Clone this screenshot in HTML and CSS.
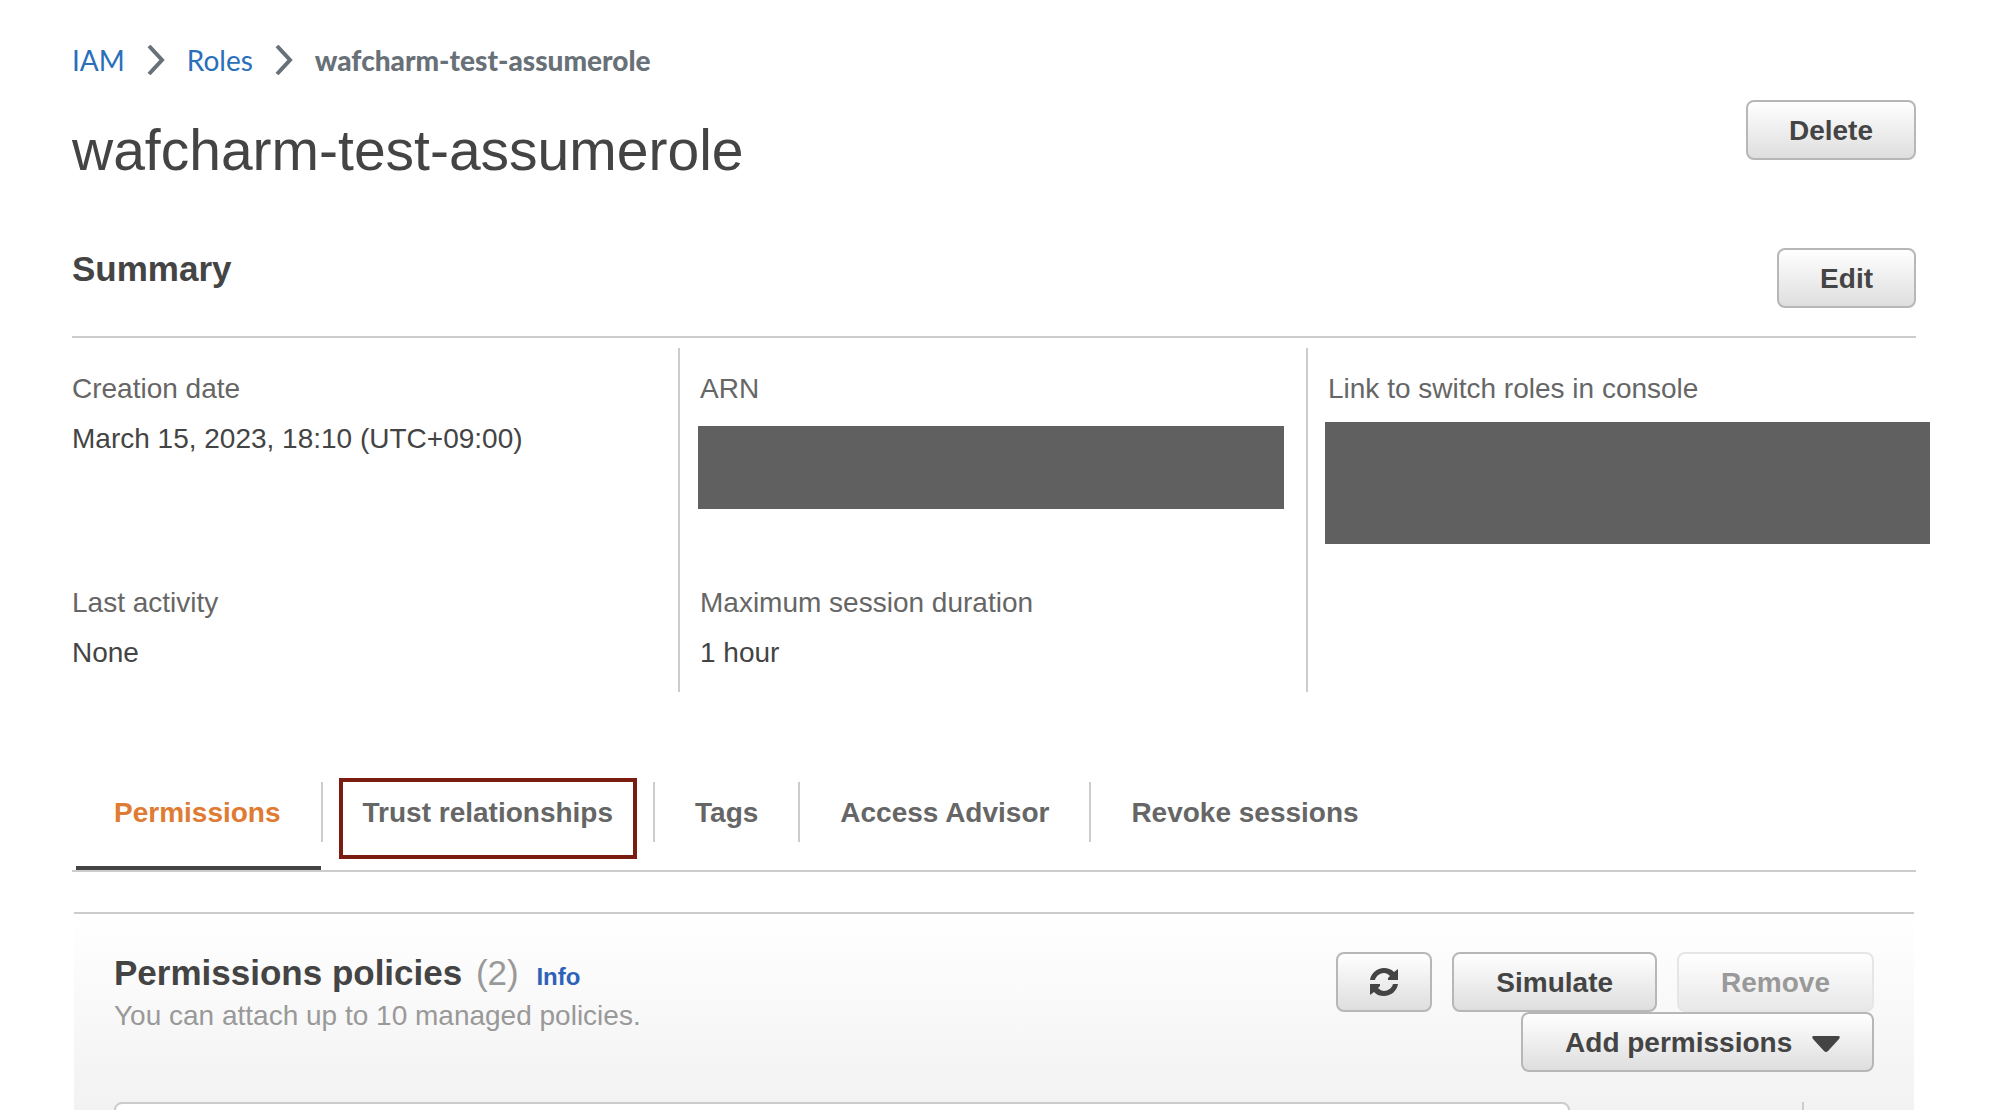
FILE: index.html
```html
<!DOCTYPE html>
<html lang="en">
<head>
<meta charset="UTF-8">
<meta name="viewport" content="width=device-width, initial-scale=1">
<title>wafcharm-test-assumerole</title>
<link rel="stylesheet" href="styles.css">
</head>
<body>
<nav class="breadcrumb" aria-label="Breadcrumb">
    <a href="#">IAM</a>
    <svg class="chevron" viewBox="0 0 18 30" aria-hidden="true"><path d="M2 1 L15 15 L2 29"/></svg>
    <a href="#">Roles</a>
    <svg class="chevron" viewBox="0 0 18 30" aria-hidden="true"><path d="M2 1 L15 15 L2 29"/></svg>
    <span class="current">wafcharm-test-assumerole</span>
</nav>

<header class="title-row">
    <h1>wafcharm-test-assumerole</h1>
    <button type="button" class="btn">Delete</button>
</header>

<section class="summary">
    <div class="summary-head">
        <h2>Summary</h2>
        <button type="button" class="btn">Edit</button>
    </div>
    <div class="summary-grid">
        <div class="column">
            <dl>
                <dt>Creation date</dt>
                <dd>March 15, 2023, 18:10 (UTC+09:00)</dd>
            </dl>
            <dl>
                <dt>Last activity</dt>
                <dd>None</dd>
            </dl>
        </div>
        <div class="column">
            <dl>
                <dt>ARN</dt>
                <dd class="redacted arn"></dd>
            </dl>
            <dl>
                <dt>Maximum session duration</dt>
                <dd>1 hour</dd>
            </dl>
        </div>
        <div class="column">
            <dl>
                <dt>Link to switch roles in console</dt>
                <dd class="redacted console-link"></dd>
            </dl>
        </div>
    </div>
</section>

<nav class="tabs" aria-label="Role details">
    <a href="#" class="tab active">Permissions</a>
    <a href="#" class="tab marked">Trust relationships</a>
    <a href="#" class="tab">Tags</a>
    <a href="#" class="tab">Access Advisor</a>
    <a href="#" class="tab">Revoke sessions</a>
</nav>

<section class="panel">
    <div class="panel-head">
        <div class="panel-title">
            <h2>Permissions policies <span class="count">(2)</span> <a href="#" class="info">Info</a></h2>
            <p>You can attach up to 10 managed policies.</p>
        </div>
        <div class="actions">
            <button type="button" class="btn btn-icon" aria-label="Refresh">
                <svg class="refresh" viewBox="0 0 28 28" aria-hidden="true">
                    <path d="M0 12 C1 5 7 0 14 0 C18 0 21 1 24 4 L28 1 V12 H18 V10 L20 8 C18 6 16 5 14 5 C10 5 6 8 5 12 Z"/>
                    <path transform="rotate(180 14 14)" d="M0 12 C1 5 7 0 14 0 C18 0 21 1 24 4 L28 1 V12 H18 V10 L20 8 C18 6 16 5 14 5 C10 5 6 8 5 12 Z"/>
                </svg>
            </button>
            <button type="button" class="btn">Simulate</button>
            <button type="button" class="btn" disabled>Remove</button>
            <button type="button" class="btn btn-menu">Add permissions
                <svg class="caret" viewBox="0 0 28 16" aria-hidden="true"><path d="M2 0 H26 Q29 0 27 3 L16 15 Q14 17 12 15 L1 3 Q-1 0 2 0 Z"/></svg>
            </button>
        </div>
    </div>
    <div class="filter-row">
        <input type="text" class="filter" aria-label="Filter policies">
        <div class="pager"></div>
    </div>
</section>
</body>
</html>
```

FILE: styles.css
```css
* {
    box-sizing: border-box;
}
body {
    margin: 0;
    padding: 40px 76px 0 72px;
    height: 100vh;
    overflow: hidden;
    background: #fff;
    color: #444;
    font: 28px/50px "Helvetica Neue", "Liberation Sans", Arial, sans-serif;
}
h1, h2, p, dl, dd {
    margin: 0;
}
a {
    text-decoration: none;
}

/* breadcrumb */
.breadcrumb {
    display: flex;
    align-items: center;
    gap: 22px;
    height: 40px;
    font-family: "Amazon Ember", Lato, sans-serif;
    line-height: 40px;
}
.breadcrumb a {
    color: #2a6fba;
}
.breadcrumb .current {
    color: #687078;
    font-weight: 900;
}
.chevron {
    width: 18px;
    height: 30px;
    fill: none;
    stroke: #687078;
    stroke-width: 4;
}

/* buttons */
.btn {
    height: 60px;
    padding: 2px 41px 0;
    border: 2px solid #b7b7b7;
    border-radius: 8px;
    background: linear-gradient(#fff, #dedede);
    color: #444;
    font: bold 28px/54px "Helvetica Neue", "Liberation Sans", Arial, sans-serif;
    white-space: nowrap;
}
.btn:disabled {
    border-color: #e6e6e6;
    background: linear-gradient(#fff, #e8e8e8);
    color: #999;
}
.actions .btn {
    padding: 2px 42px 0;
}
.actions .btn-icon {
    padding: 0 32px;
}
.actions .btn-menu {
    padding-right: 32px;
}
.refresh {
    display: block;
    width: 28px;
    height: 28px;
    fill: #444;
}
.caret {
    width: 28px;
    height: 16px;
    margin-left: 12px;
    fill: #444;
}

/* title and summary */
.title-row, .summary-head {
    display: flex;
    justify-content: space-between;
}
.title-row {
    padding-top: 20px;
}
h1 {
    padding-top: 15px;
    font-size: 57px;
    font-weight: normal;
    line-height: 70px;
}
h2 {
    font-size: 35px;
    line-height: 42px;
}
.summary {
    padding-top: 63px;
}
.summary-head {
    padding-bottom: 28px;
    border-bottom: 2px solid #ccc;
}
.summary-grid {
    display: grid;
    grid-template-columns: repeat(3, 1fr);
    gap: 20px;
    margin: 10px -20px 0 0;
}
.column {
    padding: 16px 0 14px;
    border-right: 2px solid #ccc;
}
.column:last-child {
    border-right: 0;
}
.column dl:first-child {
    min-height: 214px;
}
dt {
    color: #666;
}
.redacted {
    background: #606060;
}
.arn {
    height: 83px;
    margin: 12px 22px 0 -2px;
}
.console-link {
    height: 122px;
    margin: 8px 6px 0 -3px;
}

/* tabs */
.tabs {
    display: flex;
    margin-top: 90px;
    padding: 0 0 28px 2px;
    border-bottom: 2px solid #ccc;
}
.tab {
    position: relative;
    height: 60px;
    padding: 0 40px;
    border-right: 2px solid #ccc;
    color: #666;
    font-weight: bold;
    line-height: 62px;
}
.tab:last-child {
    border-right: 0;
}
.tab.active {
    color: #e07b33;
}
.tab.active:after {
    content: "";
    position: absolute;
    right: 0;
    bottom: -28px;
    left: 2px;
    height: 4px;
    background: #444;
}
.tab.marked:after {
    content: "";
    position: absolute;
    top: -4px;
    right: 16px;
    bottom: -17px;
    left: 16px;
    border: 4px solid #7a1c10;
}

/* policies panel */
.panel {
    margin: 40px 2px 0;
    padding: 38px 40px 0;
    border-top: 2px solid #ccc;
    background: linear-gradient(#fff, #f2f2f2 196px);
}
.panel-head {
    display: flex;
    justify-content: space-between;
}
.panel-title p {
    color: #999;
    line-height: 36px;
}
.count {
    margin-left: 4px;
    color: #999;
    font-weight: normal;
}
.info {
    margin-left: 8px;
    color: #2e62b9;
    font-size: 24px;
}
.actions {
    display: flex;
    flex-wrap: wrap;
    justify-content: flex-end;
    column-gap: 20px;
    width: 600px;
}
.filter-row {
    display: flex;
    justify-content: space-between;
    margin-top: 30px;
}
.filter {
    width: 1456px;
    flex: 0 1 auto;
    height: 64px;
    padding: 0 20px;
    border: 2px solid #ccc;
    border-radius: 8px;
    background: #fff;
    font: inherit;
}
.pager {
    width: 72px;
    border-left: 2px solid #ccc;
}
```
